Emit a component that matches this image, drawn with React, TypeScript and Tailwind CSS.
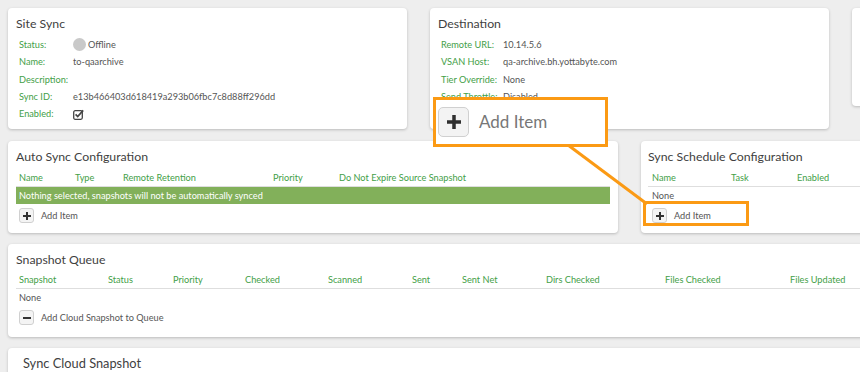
import type { ReactNode } from "react";

const siteRows = [
  { label: "Status:", value: "status" },
  { label: "Name:", value: "to-qaarchive" },
  { label: "Description:", value: "" },
  { label: "Sync ID:", value: "e13b466403d618419a293b06fbc7c8d88ff296dd" },
  { label: "Enabled:", value: "check" },
];

const destRows = [
  { label: "Remote URL:", value: "10.14.5.6" },
  { label: "VSAN Host:", value: "qa-archive.bh.yottabyte.com" },
  { label: "Tier Override:", value: "None" },
  { label: "Send Throttle:", value: "Disabled" },
];

const queueCols = [
  "Snapshot",
  "Status",
  "Priority",
  "Checked",
  "Scanned",
  "Sent",
  "Sent Net",
  "Dirs Checked",
  "Files Checked",
  "Files Updated",
];

function Card({ className, children }: { className: string; children?: ReactNode }) {
  return (
    <div className={`bg-white rounded-[4px] shadow-[0_1px_3px_rgba(0,0,0,0.22)] shrink-0 ${className}`}>
      {children}
    </div>
  );
}

function Title({ children }: { children: ReactNode }) {
  return <div className="text-[12.3px] leading-4 text-[#3f3f3f]">{children}</div>;
}

function CheckIcon() {
  return (
    <svg width="11" height="11" viewBox="0 0 11 11" className="text-[#444]">
      <rect x="0.7" y="1.7" width="8.6" height="8.6" rx="1.5" fill="none" stroke="currentColor" strokeWidth="1.3" />
      <path d="M2.6 5.4 L4.7 7.5 L10.2 1.4" fill="none" stroke="currentColor" strokeWidth="1.7" />
    </svg>
  );
}

function SmallButton({ minus }: { minus?: boolean }) {
  return (
    <div className="w-[15px] h-[15px] rounded-[3px] border border-[#d0d0d0] bg-[#f4f4f4] flex items-center justify-center">
      <svg width="8" height="8" viewBox="0 0 8 8">
        <rect x="0" y="3" width="8" height="2" fill="#333" />
        {!minus && <rect x="3" y="0" width="2" height="8" fill="#333" />}
      </svg>
    </div>
  );
}

function ActionRow({ label, minus }: { label: string; minus?: boolean }) {
  return (
    <div className="flex items-center gap-[7px] pl-[3px] pt-[2px] h-[21px]">
      <SmallButton minus={minus} />
      <span className="text-[9.2px] text-[#555]">{label}</span>
    </div>
  );
}

export default function App() {
  return (
    <div className="relative w-[860px] h-[372px] overflow-hidden bg-[#eeeeee] font-['Lato',sans-serif]">
      <div className="w-[1200px] p-2 flex flex-col">
        <div className="flex items-start gap-[23px]">
          <Card className="w-[399px] h-[121px] px-2 pt-2">
            <Title>Site Sync</Title>
            <div className="pt-[4px] pl-[3px]">
              {siteRows.map((r) => (
                <div key={r.label} className="flex items-center h-[17.4px] text-[9.2px]">
                  <span className="w-[54px] text-[#43a047]">{r.label}</span>
                  {r.value === "status" ? (
                    <span className="flex items-center gap-[2px] text-[#555]">
                      <span className="w-[13px] h-[13px] rounded-full bg-[#c9c9c9]" />
                      Offline
                    </span>
                  ) : r.value === "check" ? (
                    <CheckIcon />
                  ) : (
                    <span className="text-[#555]">{r.value}</span>
                  )}
                </div>
              ))}
            </div>
          </Card>
          <Card className="w-[399px] h-[121px] px-2 pt-2">
            <Title>Destination</Title>
            <div className="pt-[4px] pl-[3px]">
              {destRows.map((r) => (
                <div key={r.label} className="flex items-center h-[17.4px] text-[9.2px]">
                  <span className="w-[62px] text-[#43a047]">{r.label}</span>
                  <span className="text-[#555]">{r.value}</span>
                </div>
              ))}
            </div>
          </Card>
          <Card className="w-[399px] h-[98px]" />
        </div>

        <div className="flex items-start gap-[23px] mt-[12px]">
          <Card className="w-[610px] h-[92px] px-2 pt-2">
            <Title>Auto Sync Configuration</Title>
            <div className="mt-[5px] grid grid-cols-[56px_48px_150px_66px_1fr] h-[17px] items-center border-b border-[#dedede] text-[9.2px] text-[#43a047] pl-[3px]">
              <span>Name</span>
              <span>Type</span>
              <span>Remote Retention</span>
              <span>Priority</span>
              <span>Do Not Expire Source Snapshot</span>
            </div>
            <div className="h-[17px] bg-[#82b05a] flex items-center pl-[3px] text-[9.2px] text-white">
              Nothing selected, snapshots will not be automatically synced
            </div>
            <ActionRow label="Add Item" />
          </Card>
          <Card className="w-[400px] h-[92px] px-[7px] pt-2">
            <Title>Sync Schedule Configuration</Title>
            <div className="mt-[5px] grid grid-cols-[79px_66px_1fr] h-[17px] items-center border-b border-[#dedede] text-[9.2px] text-[#43a047] pl-[4px]">
              <span>Name</span>
              <span>Task</span>
              <span>Enabled</span>
            </div>
            <div className="h-[17px] flex items-center pl-[4px] text-[9.2px] text-[#555]">None</div>
            <div className="pl-[1px]">
              <ActionRow label="Add Item" />
            </div>
          </Card>
        </div>

        <Card className="w-[880px] h-[93px] px-2 pt-[8px] mt-[11px]">
          <Title>Snapshot Queue</Title>
          <div className="mt-[4px] grid grid-cols-[89px_65px_72px_83px_84px_50px_84px_119px_125px_1fr] h-[17px] items-center border-b border-[#dedede] text-[9.2px] text-[#43a047] pl-[3px]">
            {queueCols.map((c) => (
              <span key={c}>{c}</span>
            ))}
          </div>
          <div className="h-[17px] flex items-center pl-[3px] text-[9.2px] text-[#555]">None</div>
          <ActionRow label="Add Cloud Snapshot to Queue" minus />
        </Card>

        <Card className="w-[880px] h-[60px] px-[15px] pt-[7px] mt-[11px]">
          <div className="text-[12.8px] leading-4 text-[#3f3f3f]">Sync Cloud Snapshot</div>
        </Card>
      </div>

      <svg className="absolute left-0 top-0 pointer-events-none" width="860" height="372">
        <line x1="568" y1="145" x2="647" y2="204" stroke="#fb9a14" strokeWidth="3" />
      </svg>

      <div className="absolute left-[433px] top-[97px] w-[175px] h-[50px] border-[3px] border-[#fb9a14] bg-white flex items-center gap-[10px] pl-[2px]">
        <div className="w-[31px] h-[30px] rounded-[5px] border border-[#d0d0d0] bg-[#f3f3f3] flex items-center justify-center">
          <svg width="14" height="14" viewBox="0 0 14 14">
            <rect x="0" y="5.25" width="14" height="3.5" fill="#2f2f2f" />
            <rect x="5.25" y="0" width="3.5" height="14" fill="#2f2f2f" />
          </svg>
        </div>
        <span className="text-[17px] text-[#777]">Add Item</span>
      </div>

      <div className="absolute left-[643px] top-[201px] w-[106px] h-[25px] border-[3px] border-[#fb9a14]" />
    </div>
  );
}
